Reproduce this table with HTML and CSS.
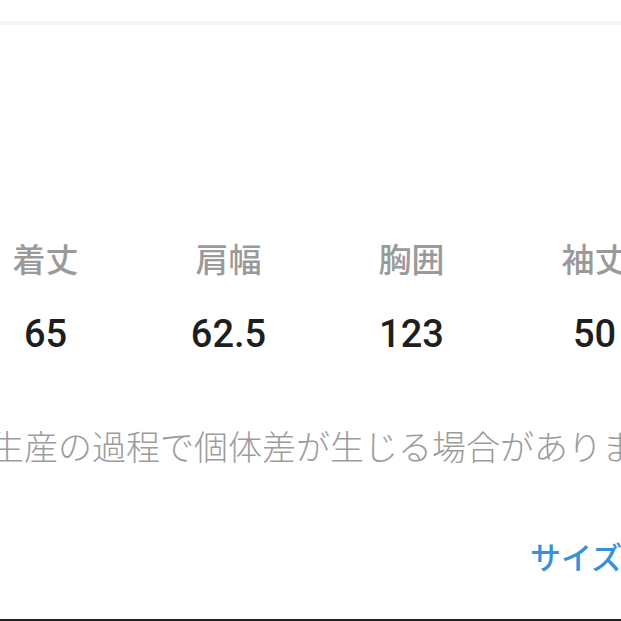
FILE: index.html
```html
<!DOCTYPE html>
<html lang="ja">
<head>
<meta charset="utf-8">
<link rel="stylesheet" href="styles.css">
</head>
<body>
<div class="page">
  <div class="topbar"></div>
  <div class="table">
    <div class="row labels">
      <div class="cell">着丈</div>
      <div class="cell">肩幅</div>
      <div class="cell">胸囲</div>
      <div class="cell">袖丈</div>
    </div>
    <div class="row values">
      <div class="cell">65</div>
      <div class="cell">62.5</div>
      <div class="cell">123</div>
      <div class="cell">50</div>
    </div>
  </div>
  <p class="notice">生産の過程で個体差が生じる場合がありますのでご了承ください。</p>
  <p class="link">サイズ表の見方</p>
</div>
</body>
</html>
```
FILE: styles.css
```css
html, body {
  margin: 0;
  padding: 0;
  background: #ffffff;
}
.page {
  width: 621px;
  height: 621px;
  box-sizing: border-box;
  border-bottom: 2px solid #222222;
  overflow: hidden;
  font-family: "Noto Sans CJK JP", "Noto Sans", sans-serif;
}
.topbar {
  height: 21px;
  border-bottom: 4px solid #f4f4f4;
}
.table {
  margin-top: 213px;
  margin-left: -46px;
}
.row {
  display: flex;
  white-space: nowrap;
}
.cell {
  flex: 0 0 183px;
  text-align: center;
}
.labels {
  font-size: 33px;
  line-height: 40px;
  height: 40px;
  color: #9a9a9a;
  font-weight: 500;
}
.values {
  margin-top: 36px;
  font-family: Roboto, "Liberation Sans", sans-serif;
  font-size: 38px;
  line-height: 40px;
  height: 40px;
  color: #1e1e1e;
  font-weight: 500;
}
.notice {
  margin: 72px 0 0 -10px;
  font-size: 34px;
  line-height: 40px;
  height: 40px;
  color: #9c9c9c;
  font-weight: 300;
  white-space: nowrap;
}
.link {
  margin: 70px 0 0 530px;
  font-size: 31px;
  line-height: 40px;
  height: 40px;
  color: #3b8fd5;
  font-weight: 500;
  white-space: nowrap;
}
```
